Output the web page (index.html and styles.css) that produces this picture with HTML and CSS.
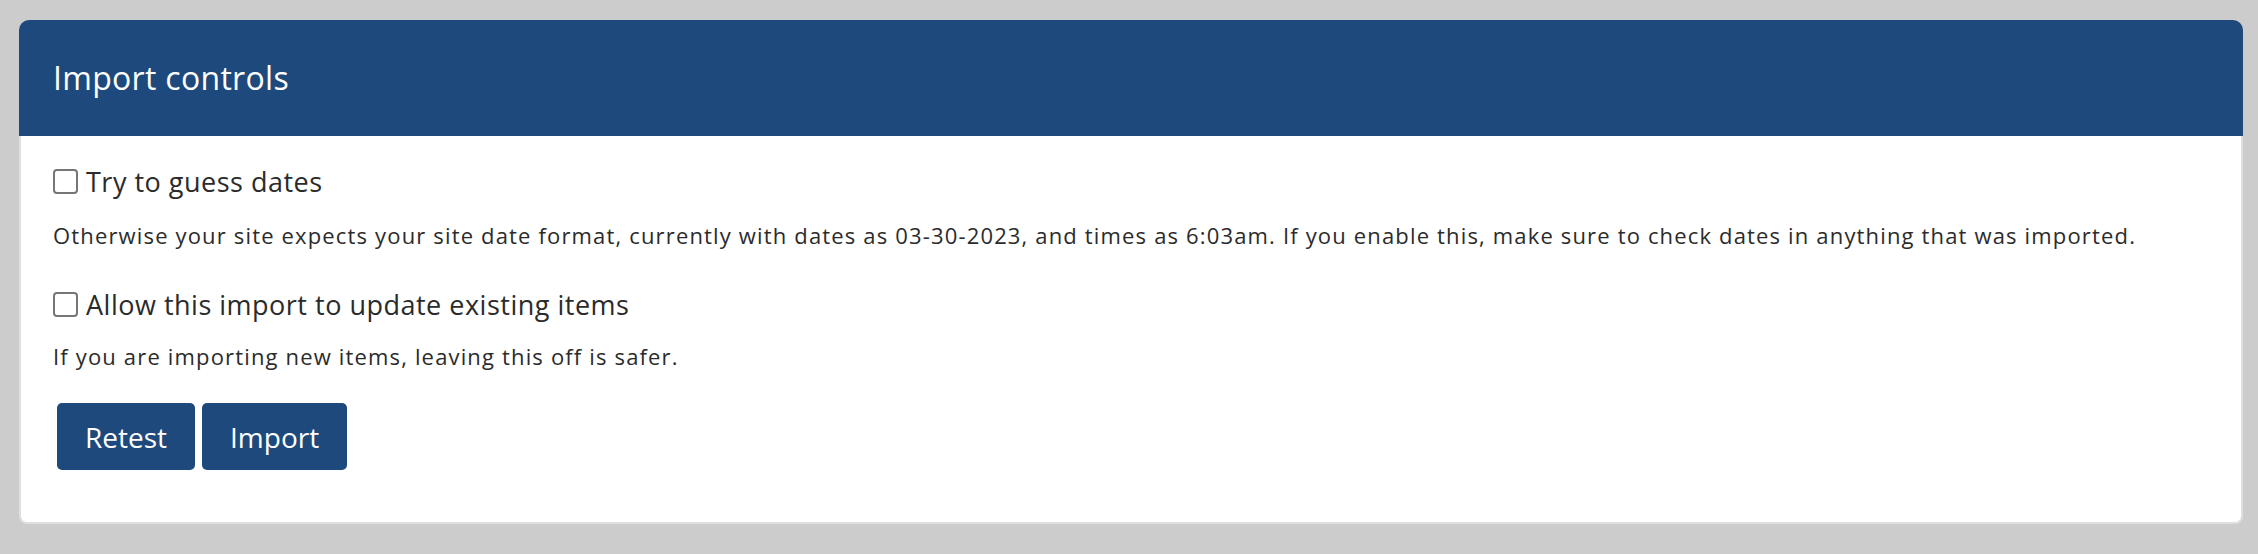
FILE: index.html
```html
<!DOCTYPE html>
<html lang="en">
<head>
<meta charset="utf-8">
<title>Import controls</title>
<link rel="stylesheet" href="styles.css">
</head>
<body>
<div class="panel">
  <div class="panel-head">
    <h2 class="panel-title">Import controls</h2>
  </div>
  <div class="panel-body">
    <label class="check"><input type="checkbox" class="check-box"><span>Try to guess dates</span></label>
    <p class="help help-first">Otherwise your site expects your site date format, currently with dates as 03-30-2023, and times as 6:03am. If you enable this, make sure to check dates in anything that was imported.</p>
    <label class="check check-second"><input type="checkbox" class="check-box"><span>Allow this import to update existing items</span></label>
    <p class="help help-second">If you are importing new items, leaving this off is safer.</p>
    <div class="actions">
      <button class="btn" type="button">Retest</button>
      <button class="btn" type="button">Import</button>
    </div>
  </div>
</div>
</body>
</html>
```

FILE: styles.css
```css
html, body {
  margin: 0;
  padding: 0;
  background: #cccccc;
}
body {
  padding: 20px 15px 31px 19px;
  font-family: "Open Sans", "Noto Sans", sans-serif;
  color: #2b2b2b;
}
.panel {
  display: flex;
  flex-direction: column;
}
.panel-head {
  background: #1e497c;
  height: 116px;
  border-radius: 10px 10px 0 0;
  display: flex;
  align-items: center;
  padding: 0 34px;
}
.panel-title {
  margin: 0;
  font-weight: 400;
  font-size: 32px;
  letter-spacing: 0.3px;
  color: #ffffff;
  line-height: 1;
}
.panel-body {
  background: #ffffff;
  border: 2px solid #dfdfdf;
  border-top: none;
  border-radius: 0 0 8px 8px;
  padding: 27px 32px 52px 32px;
}
.check {
  display: flex;
  align-items: center;
  gap: 8px;
  height: 36px;
  font-size: 27px;
  letter-spacing: 0.5px;
}
.check-box {
  appearance: none;
  -webkit-appearance: none;
  margin: 0;
  width: 25px;
  height: 25px;
  border: 2px solid #767676;
  border-radius: 4px;
  background: #ffffff;
  box-sizing: border-box;
  flex: none;
}
.help {
  margin: 0;
  font-size: 22px;
  letter-spacing: 1.16px;
  line-height: 30px;
}
.help-first {
  margin-top: 21px;
}
.check-second {
  margin-top: 36px;
}
.help-second {
  margin-top: 19px;
}
.actions {
  display: flex;
  gap: 7px;
  margin-top: 32px;
  padding-left: 4px;
}
.btn {
  background: #1e497c;
  color: #ffffff;
  border: none;
  border-radius: 5px;
  height: 67px;
  padding: 0 28px;
  font-family: "Open Sans", "Noto Sans", sans-serif;
  font-size: 28px;
  line-height: 1;
  cursor: pointer;
}
```
